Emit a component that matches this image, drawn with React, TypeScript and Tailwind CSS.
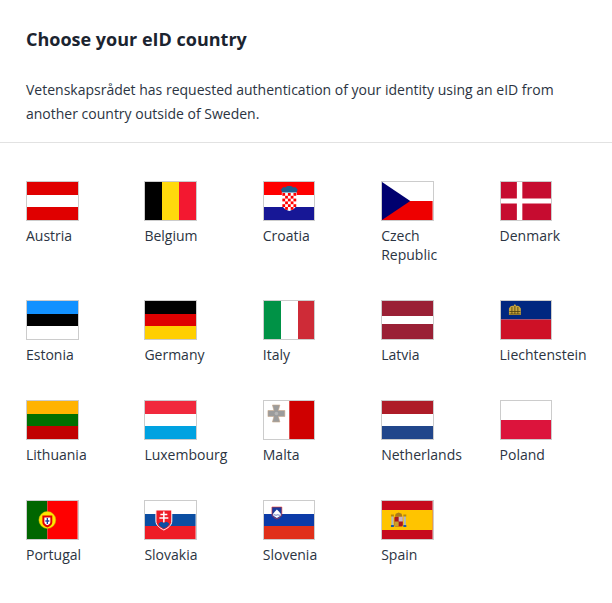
import React from 'react'

const Stripes = ({ colors }: { colors: string[] }) => (
  <div className="flex flex-col h-full">
    {colors.map((c, i) => (
      <div key={i} className="flex-1" style={{ backgroundColor: c }} />
    ))}
  </div>
)

const Bars = ({ colors }: { colors: string[] }) => (
  <div className="flex h-full">
    {colors.map((c, i) => (
      <div key={i} className="flex-1" style={{ backgroundColor: c }} />
    ))}
  </div>
)

const Svg = ({ children }: { children: React.ReactNode }) => (
  <svg viewBox="0 0 51 38" preserveAspectRatio="none" className="block w-full h-full">
    {children}
  </svg>
)

const Croatia = () => (
  <Svg>
    <rect width="51" height="13" fill="#ff0000" />
    <rect y="13" width="51" height="12" fill="#ffffff" />
    <rect y="25" width="51" height="13" fill="#171796" />
    <path d="M17 7.500l2.500-2.500 2 .5 2-1.500h4l2 1.500 2-.5L34 7.500 32.500 11h-14z" fill="#1f5f8c" />
    <path d="M18 10.500h15v11c0 4-3.500 6-7.500 7.500-4-1.500-7.500-3.500-7.500-7.500z" fill="#ffffff" />
    {[0, 1, 2, 3, 4].flatMap((col) =>
      [0, 1, 2, 3, 4, 5].map((row) =>
        (col + row) % 2 === 0 ? (
          <rect key={`${col}-${row}`} x={18.5 + col * 2.8} y={11 + row * 2.8} width="2.8" height="2.8" fill="#f00" />
        ) : null,
      ),
    )}
  </Svg>
)

const Czech = () => (
  <Svg>
    <rect width="51" height="19" fill="#ffffff" />
    <rect y="19" width="51" height="19" fill="#ee0000" />
    <path d="M0 0l28.500 19L0 38z" fill="#00006f" />
  </Svg>
)

const Denmark = () => (
  <Svg>
    <rect width="51" height="38" fill="#c60c30" />
    <rect x="16" width="5.500" height="38" fill="#ffffff" />
    <rect y="16.500" width="51" height="5" fill="#ffffff" />
  </Svg>
)

const Liechtenstein = () => (
  <Svg>
    <rect width="51" height="18.500" fill="#002780" />
    <rect y="18.500" width="51" height="19.500" fill="#ce1126" />
    <path d="M8 14V7.500C9.500 5 11 4.500 12.500 5L14 3l1.500 2c1.500-.5 3 0 4.500 2.500V14z" fill="#c9a63c" />
    <path d="M8.500 10.500h11M8.500 13h11M11 6v7M14 5v8M17 6v7" stroke="#4a3c10" strokeWidth="0.8" fill="none" />
  </Svg>
)

const Malta = () => (
  <Svg>
    <rect width="25.500" height="38" fill="#ffffff" />
    <rect x="25.500" width="25.500" height="38" fill="#cf0000" />
    <path d="M8.500 4h7.500l-1.500 5.500H21v6h-6.500L16 21H8.500l1.500-5.500H4v-6h6z" fill="#9c9c9c" stroke="#c9a98a" strokeWidth="0.6" />
    <circle cx="12.500" cy="12.500" r="1.800" fill="#b5b5b5" />
  </Svg>
)

const Portugal = () => (
  <Svg>
    <rect width="20.500" height="38" fill="#006600" />
    <rect x="20.500" width="30.500" height="38" fill="#ff0000" />
    <circle cx="20.500" cy="19" r="8.500" fill="#ffe600" stroke="#c8b400" strokeWidth="0.5" />
    <path d="M15.500 14.500h10v6.500c0 3-2.500 4.500-5 5.500-2.500-1-5-2.500-5-5.500z" fill="#e00000" />
    <path d="M17.500 16.500h6v4.500c0 1.800-1.500 2.700-3 3.300-1.500-.6-3-1.500-3-3.300z" fill="#ffffff" />
    <path d="M20.500 17v6M18.500 20h4" stroke="#1a3a9c" strokeWidth="1.300" />
  </Svg>
)

const Slovakia = () => (
  <Svg>
    <rect width="51" height="13" fill="#ffffff" />
    <rect y="13" width="51" height="12" fill="#0b4ea2" />
    <rect y="25" width="51" height="13" fill="#ee1c25" />
    <path d="M11 9h16v11c0 4.500-4 7-8 9-4-2-8-4.500-8-9z" fill="#ee1c25" stroke="#ffffff" strokeWidth="1" />
    <path d="M19 10.500v11M15.500 13.500h7M14.500 17h9" stroke="#ffffff" strokeWidth="1.500" />
    <path d="M13.500 23c1.800-2.500 3.800-2.500 5.500-1 1.700-1.500 3.700-1.500 5.500 1-1 2-3.200 3.500-5.500 4.800-2.300-1.300-4.500-2.800-5.500-4.800z" fill="#0b4ea2" />
  </Svg>
)

const Slovenia = () => (
  <Svg>
    <rect width="51" height="13" fill="#ffffff" />
    <rect y="13" width="51" height="12" fill="#0c3ba8" />
    <rect y="25" width="51" height="13" fill="#e0301a" />
    <path d="M8 6h10v7c0 2.500-2.500 4-5 5-2.500-1-5-2.500-5-5z" fill="#1a3a9c" stroke="#ee3a2c" strokeWidth="0.6" />
    <path d="M9 13l2-2.500 2-2 2 2 2 2.500v1.500L13 17l-4-2.500z" fill="#ffffff" />
    <path d="M9.500 14c1.200-.8 2.300.8 3.500 0s2.300.8 3.500 0" stroke="#1a3a9c" strokeWidth="0.7" fill="none" />
  </Svg>
)

const Spain = () => (
  <Svg>
    <rect width="51" height="38" fill="#c60b1e" />
    <rect y="9" width="51" height="20" fill="#ffc400" />
    <rect x="12.500" y="15.500" width="8.500" height="10" rx="1.500" fill="#ad1519" />
    <rect x="16.800" y="15.500" width="4.200" height="5" fill="#c8b7c0" />
    <rect x="12.500" y="20.500" width="4.300" height="5" fill="#c9a02a" />
    <path d="M13 15.500l.8-2.800 3-1.200 3 1.200.7 2.800z" fill="#a8791c" />
    <rect x="9.500" y="15" width="2" height="9.500" fill="#a9b7c9" />
    <rect x="22" y="15" width="2" height="9.500" fill="#a9b7c9" />
    <rect x="9" y="24" width="3" height="2" fill="#1d5aa6" />
    <rect x="21.500" y="24" width="3" height="2" fill="#1d5aa6" />
    <rect x="9" y="13.500" width="3" height="2" fill="#b8860b" />
    <rect x="21.500" y="13.500" width="3" height="2" fill="#b8860b" />
  </Svg>
)

const countries: { name: string; flag: React.ReactNode }[] = [
  { name: 'Austria', flag: <Stripes colors={['#e00000', '#ffffff', '#e00000']} /> },
  { name: 'Belgium', flag: <Bars colors={['#000000', '#ffd90c', '#f31830']} /> },
  { name: 'Croatia', flag: <Croatia /> },
  { name: 'Czech Republic', flag: <Czech /> },
  { name: 'Denmark', flag: <Denmark /> },
  { name: 'Estonia', flag: <Stripes colors={['#1291ff', '#000000', '#ffffff']} /> },
  { name: 'Germany', flag: <Stripes colors={['#000000', '#de0000', '#ffcf00']} /> },
  { name: 'Italy', flag: <Bars colors={['#009246', '#ffffff', '#ce2b37']} /> },
  {
    name: 'Latvia',
    flag: (
      <div className="flex flex-col h-full">
        <div className="h-[15px] bg-[#9a2035]" />
        <div className="h-[8px] bg-white" />
        <div className="h-[15px] bg-[#9a2035]" />
      </div>
    ),
  },
  { name: 'Liechtenstein', flag: <Liechtenstein /> },
  { name: 'Lithuania', flag: <Stripes colors={['#ffb300', '#006f00', '#c10000']} /> },
  { name: 'Luxembourg', flag: <Stripes colors={['#f1293d', '#ffffff', '#00a2e1']} /> },
  { name: 'Malta', flag: <Malta /> },
  { name: 'Netherlands', flag: <Stripes colors={['#ae1c28', '#ffffff', '#21468b']} /> },
  { name: 'Poland', flag: <Stripes colors={['#ffffff', '#dc143c']} /> },
  { name: 'Portugal', flag: <Portugal /> },
  { name: 'Slovakia', flag: <Slovakia /> },
  { name: 'Slovenia', flag: <Slovenia /> },
  { name: 'Spain', flag: <Spain /> },
]

export default function App() {
  return (
    <div className="w-[612px] h-[603px] overflow-hidden bg-white text-[#1f2a37] font-['Open_Sans',sans-serif]">
      <div className="px-[26px] pt-[27px] pb-[16px] border-b border-[#e2e2e2]">
        <h1 className="text-[18px] leading-[24px] font-bold text-[#1b2430]">Choose your eID country</h1>
        <p className="mt-[27px] text-[14px] leading-[24px] text-[#2b3442]">
          Vetenskapsrådet has requested authentication of your identity using an eID from another country outside of Sweden.
        </p>
      </div>

      <div className="grid grid-cols-[repeat(4,118.4px)_1fr] pl-[26px] pt-[38px]">
        {countries.map((c) => (
          <div key={c.name} className="pb-[36px] pr-[24px]">
            <div className="w-[52.6px] h-[40px] border border-[#cccccc] overflow-hidden bg-white">{c.flag}</div>
            <div className="mt-[5px] text-[14px] leading-[19px] text-[#2b3442]">{c.name}</div>
          </div>
        ))}
      </div>
    </div>
  )
}
